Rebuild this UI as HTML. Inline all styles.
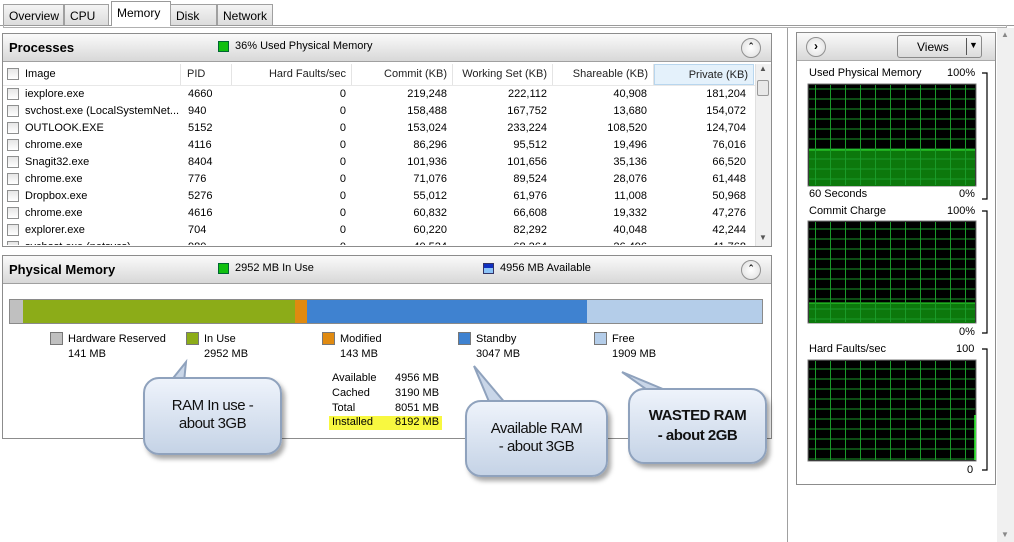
<!DOCTYPE html>
<html><head><style>
*{margin:0;padding:0;box-sizing:border-box}
body{width:1014px;height:542px;background:#fff;font-family:"Liberation Sans",sans-serif;font-size:11px;color:#000;position:relative;overflow:hidden}
.a{position:absolute;white-space:nowrap}
.tab{position:absolute;top:4px;height:21px;border:1px solid #a0a0a0;border-bottom:none;background:linear-gradient(#f4f4f4,#dcdcdc);font-size:12px;padding:4px 5px 0}
.hdr{position:absolute;background:linear-gradient(#fafafa,#d8d8d8);border-bottom:1px solid #a0a0a0;font-weight:bold;font-size:13px}
.cb{position:absolute;width:12px;height:12px;border:1px solid #8e8f8f;background:linear-gradient(#e6e6e6,#fff)}
.r{text-align:right}
.col{position:absolute;top:64px;height:21px;border-right:1px solid #e4e4e4;font-size:11px;padding-top:4px;text-align:right;padding-right:5px;color:#222}
.up{position:absolute;width:20px;height:20px;border-radius:50%;border:1px solid #909090;background:radial-gradient(#fff,#ddd);font-size:11px;text-align:center;line-height:18px;font-weight:bold}
.bub{position:absolute;border-radius:16px;background:linear-gradient(#eef3fb,#c5d3e6);border:2px solid #8fa2bd;box-shadow:3px 4px 5px rgba(0,0,0,.35);text-align:center;font-size:15px;color:#111;letter-spacing:-0.5px}
.sw{position:absolute;width:13px;height:13px;border:1px solid #777}
</style></head><body>
<div class="a" style="left:0;top:25px;width:1014px;height:1px;background:#9a9a9a"></div>
<div class="a" style="left:3px;top:25px;width:1004px;height:3px;border:1px solid #b0b0b0;border-top:none"></div>
<div class="tab" style="left:3px;width:61px">Overview</div>
<div class="tab" style="left:64px;width:45px">CPU</div>
<div class="tab" style="left:111px;top:1px;height:25px;width:60px;background:#fff;border-color:#999">Memory</div>
<div class="tab" style="left:170px;width:47px">Disk</div>
<div class="tab" style="left:217px;width:56px">Network</div>

<div class="a" style="left:2px;top:33px;width:770px;height:214px;border:1px solid #8c8c8c;background:#fff"></div>
<div class="hdr" style="left:3px;top:34px;width:768px;height:28px;padding:6px 0 0 6px">Processes</div>
<div class="a" style="left:218px;top:41px;width:11px;height:11px;background:#10c010;border:1px solid #063"></div>
<div class="a" style="left:235px;top:40px;font-size:11px">36% Used Physical Memory</div>
<div class="up" style="left:741px;top:38px">&#710;</div>
<div class="cb" style="left:7px;top:68px"></div>
<div class="a" style="left:25px;top:68px">Image</div>
<div class="col" style="left:180px;width:52px;text-align:left;padding-left:7px">PID</div>
<div class="a" style="left:180px;top:64px;width:1px;height:21px;background:#e4e4e4"></div>
<div class="col" style="left:232px;width:120px">Hard Faults/sec</div>
<div class="col" style="left:352px;width:101px">Commit (KB)</div>
<div class="col" style="left:453px;width:100px">Working Set (KB)</div>
<div class="col" style="left:553px;width:101px">Shareable (KB)</div>
<div class="col" style="left:654px;width:100px;background:#e4f1fb;border:1px solid #b8d6ee">Private (KB)</div>
<div class="a" style="left:3px;top:85px;width:752px;height:1px;background:#e8e8e8"></div>
<div class="a" style="left:755px;top:64px;width:16px;height:182px;background:#f0f0f0;border-left:1px solid #e0e0e0"></div>
<div class="a" style="left:757px;top:80px;width:12px;height:16px;border:1px solid #999;border-radius:2px;background:#e8e8e8"></div>
<div class="a" style="left:759px;top:64px;font-size:8px;color:#555">&#9650;</div>
<div class="a" style="left:759px;top:233px;font-size:8px;color:#555">&#9660;</div>
<div class="a" style="left:3px;top:86px;width:752px;height:159px;overflow:hidden">
<div class="a" style="top:0;left:0;width:752px;height:170px">
<div class="cb" style="left:4px;top:2px"></div><div class="a" style="left:22px;top:2px">iexplore.exe</div><div class="a" style="left:185px;top:2px">4660</div><div class="a r" style="left:230px;width:113px;top:2px">0</div><div class="a r" style="left:350px;width:94px;top:2px">219,248</div><div class="a r" style="left:450px;width:94px;top:2px">222,112</div><div class="a r" style="left:550px;width:94px;top:2px">40,908</div><div class="a r" style="left:650px;width:93px;top:2px">181,204</div>
<div class="cb" style="left:4px;top:19px"></div><div class="a" style="left:22px;top:19px">svchost.exe (LocalSystemNet...</div><div class="a" style="left:185px;top:19px">940</div><div class="a r" style="left:230px;width:113px;top:19px">0</div><div class="a r" style="left:350px;width:94px;top:19px">158,488</div><div class="a r" style="left:450px;width:94px;top:19px">167,752</div><div class="a r" style="left:550px;width:94px;top:19px">13,680</div><div class="a r" style="left:650px;width:93px;top:19px">154,072</div>
<div class="cb" style="left:4px;top:36px"></div><div class="a" style="left:22px;top:36px">OUTLOOK.EXE</div><div class="a" style="left:185px;top:36px">5152</div><div class="a r" style="left:230px;width:113px;top:36px">0</div><div class="a r" style="left:350px;width:94px;top:36px">153,024</div><div class="a r" style="left:450px;width:94px;top:36px">233,224</div><div class="a r" style="left:550px;width:94px;top:36px">108,520</div><div class="a r" style="left:650px;width:93px;top:36px">124,704</div>
<div class="cb" style="left:4px;top:53px"></div><div class="a" style="left:22px;top:53px">chrome.exe</div><div class="a" style="left:185px;top:53px">4116</div><div class="a r" style="left:230px;width:113px;top:53px">0</div><div class="a r" style="left:350px;width:94px;top:53px">86,296</div><div class="a r" style="left:450px;width:94px;top:53px">95,512</div><div class="a r" style="left:550px;width:94px;top:53px">19,496</div><div class="a r" style="left:650px;width:93px;top:53px">76,016</div>
<div class="cb" style="left:4px;top:70px"></div><div class="a" style="left:22px;top:70px">Snagit32.exe</div><div class="a" style="left:185px;top:70px">8404</div><div class="a r" style="left:230px;width:113px;top:70px">0</div><div class="a r" style="left:350px;width:94px;top:70px">101,936</div><div class="a r" style="left:450px;width:94px;top:70px">101,656</div><div class="a r" style="left:550px;width:94px;top:70px">35,136</div><div class="a r" style="left:650px;width:93px;top:70px">66,520</div>
<div class="cb" style="left:4px;top:87px"></div><div class="a" style="left:22px;top:87px">chrome.exe</div><div class="a" style="left:185px;top:87px">776</div><div class="a r" style="left:230px;width:113px;top:87px">0</div><div class="a r" style="left:350px;width:94px;top:87px">71,076</div><div class="a r" style="left:450px;width:94px;top:87px">89,524</div><div class="a r" style="left:550px;width:94px;top:87px">28,076</div><div class="a r" style="left:650px;width:93px;top:87px">61,448</div>
<div class="cb" style="left:4px;top:104px"></div><div class="a" style="left:22px;top:104px">Dropbox.exe</div><div class="a" style="left:185px;top:104px">5276</div><div class="a r" style="left:230px;width:113px;top:104px">0</div><div class="a r" style="left:350px;width:94px;top:104px">55,012</div><div class="a r" style="left:450px;width:94px;top:104px">61,976</div><div class="a r" style="left:550px;width:94px;top:104px">11,008</div><div class="a r" style="left:650px;width:93px;top:104px">50,968</div>
<div class="cb" style="left:4px;top:121px"></div><div class="a" style="left:22px;top:121px">chrome.exe</div><div class="a" style="left:185px;top:121px">4616</div><div class="a r" style="left:230px;width:113px;top:121px">0</div><div class="a r" style="left:350px;width:94px;top:121px">60,832</div><div class="a r" style="left:450px;width:94px;top:121px">66,608</div><div class="a r" style="left:550px;width:94px;top:121px">19,332</div><div class="a r" style="left:650px;width:93px;top:121px">47,276</div>
<div class="cb" style="left:4px;top:138px"></div><div class="a" style="left:22px;top:138px">explorer.exe</div><div class="a" style="left:185px;top:138px">704</div><div class="a r" style="left:230px;width:113px;top:138px">0</div><div class="a r" style="left:350px;width:94px;top:138px">60,220</div><div class="a r" style="left:450px;width:94px;top:138px">82,292</div><div class="a r" style="left:550px;width:94px;top:138px">40,048</div><div class="a r" style="left:650px;width:93px;top:138px">42,244</div>
<div class="cb" style="left:4px;top:155px"></div><div class="a" style="left:22px;top:155px">svchost.exe (netsvcs)</div><div class="a" style="left:185px;top:155px">980</div><div class="a r" style="left:230px;width:113px;top:155px">0</div><div class="a r" style="left:350px;width:94px;top:155px">40,524</div><div class="a r" style="left:450px;width:94px;top:155px">68,264</div><div class="a r" style="left:550px;width:94px;top:155px">26,496</div><div class="a r" style="left:650px;width:93px;top:155px">41,768</div>
</div></div>

<div class="a" style="left:2px;top:255px;width:770px;height:184px;border:1px solid #8c8c8c;background:#fff"></div>
<div class="hdr" style="left:3px;top:256px;width:768px;height:28px;padding:6px 0 0 6px">Physical Memory</div>
<div class="a" style="left:218px;top:263px;width:11px;height:11px;background:#10c010;border:1px solid #063"></div>
<div class="a" style="left:235px;top:262px">2952 MB In Use</div>
<div class="a" style="left:483px;top:263px;width:11px;height:11px;background:linear-gradient(#1030c0 45%,#8cc4f8 45%);border:1px solid #336"></div>
<div class="a" style="left:500px;top:262px">4956 MB Available</div>
<div class="up" style="left:741px;top:260px">&#710;</div>
<div class="a" style="left:9px;top:299px;width:754px;height:25px;border:1px solid #8a8a8a;display:flex">
<div style="width:13px;background:#c0c0c0"></div><div style="width:272px;background:#8cac18"></div><div style="width:12px;background:#e08a10"></div><div style="width:280px;background:#3f82d0"></div><div style="flex:1;background:#b4cde9"></div></div>
<div class="sw" style="left:50px;top:332px;background:#c0c0c0"></div><div class="a" style="left:68px;top:333px">Hardware Reserved</div><div class="a" style="left:68px;top:348px">141 MB</div>
<div class="sw" style="left:186px;top:332px;background:#8cac18"></div><div class="a" style="left:204px;top:333px">In Use</div><div class="a" style="left:204px;top:348px">2952 MB</div>
<div class="sw" style="left:322px;top:332px;background:#e08a10"></div><div class="a" style="left:340px;top:333px">Modified</div><div class="a" style="left:340px;top:348px">143 MB</div>
<div class="sw" style="left:458px;top:332px;background:#3f82d0"></div><div class="a" style="left:476px;top:333px">Standby</div><div class="a" style="left:476px;top:348px">3047 MB</div>
<div class="sw" style="left:594px;top:332px;background:#b4cde9"></div><div class="a" style="left:612px;top:333px">Free</div><div class="a" style="left:612px;top:348px">1909 MB</div>
<div class="a" style="left:332px;top:371px;line-height:15px">Available<br>Cached<br>Total</div>
<div class="a" style="left:395px;top:371px;line-height:15px">4956 MB<br>3190 MB<br>8051 MB</div>
<div class="a" style="left:329px;top:416px;width:113px;height:14px;background:#f8f840"></div>
<div class="a" style="left:332px;top:416px">Installed</div><div class="a" style="left:395px;top:416px">8192 MB</div>

<svg class="a" style="left:0;top:0" width="1014" height="542">
<polygon points="186,362 170,382 184,382" fill="#c9d6e8" stroke="#8fa2bd" stroke-width="2"/>
<polygon points="474,366 490,404 506,404" fill="#c9d6e8" stroke="#8fa2bd" stroke-width="2"/>
<polygon points="622,372 670,392 650,392" fill="#c9d6e8" stroke="#8fa2bd" stroke-width="2"/>
</svg>
<div class="bub" style="left:143px;top:377px;width:139px;height:78px;padding-top:18px;line-height:18px">RAM In use -<br>about 3GB</div>
<div class="bub" style="left:465px;top:400px;width:143px;height:77px;padding-top:18px;line-height:18px">Available RAM<br>- about 3GB</div>
<div class="bub" style="left:628px;top:388px;width:139px;height:76px;padding-top:16px;line-height:20px;font-weight:bold">WASTED RAM<br>- about 2GB</div>

<div class="a" style="left:787px;top:28px;width:1px;height:514px;background:#a0a0a0"></div>
<div class="a" style="left:997px;top:28px;width:17px;height:514px;background:#f0f0f0"></div>
<div class="a" style="left:1001px;top:30px;font-size:8px;color:#888">&#9650;</div>
<div class="a" style="left:1001px;top:530px;font-size:8px;color:#888">&#9660;</div>
<div class="a" style="left:796px;top:32px;width:200px;height:453px;border:1px solid #8c8c8c"></div>
<div class="a" style="left:797px;top:33px;width:198px;height:28px;background:linear-gradient(#fafafa,#d8d8d8);border-bottom:1px solid #aaa"></div>
<div class="up" style="left:806px;top:37px;font-size:12px;line-height:17px">&#8250;</div>
<div class="a" style="left:897px;top:35px;width:85px;height:23px;border:1px solid #8a8a8a;border-radius:3px;background:linear-gradient(#f8f8f8,#dcdcdc);font-size:12px;padding:4px 0 0 19px">Views</div>
<div class="a" style="left:966px;top:38px;width:1px;height:17px;background:#555"></div>
<div class="a" style="left:969px;top:40px;font-size:9px">&#9660;</div>

<div class="a" style="left:809px;top:67px">Used Physical Memory</div><div class="a" style="left:947px;top:67px">100%</div>
<div class="a" style="left:809px;top:188px">60 Seconds</div><div class="a" style="left:959px;top:188px">0%</div>
<div class="a" style="left:809px;top:205px">Commit Charge</div><div class="a" style="left:947px;top:205px">100%</div>
<div class="a" style="left:959px;top:326px">0%</div>
<div class="a" style="left:809px;top:343px">Hard Faults/sec</div><div class="a" style="left:956px;top:343px">100</div>
<div class="a" style="left:967px;top:464px">0</div>
<svg class="a" style="left:800px;top:60px" width="196" height="420">
<defs><pattern id="g" x="8" y="24" width="15" height="10" patternUnits="userSpaceOnUse"><path d="M7.5 0V10M0 5H15" stroke="#1a9a2a" stroke-width="1" fill="none"/></pattern></defs>
<g fill="none" stroke="#000" stroke-width="1.2"><path d="M182 13H187V139H182"/><path d="M182 151H187V273H182"/><path d="M182 289H187V410H182"/></g>
<rect x="8" y="24" width="168" height="102" fill="#000" stroke="#777"/>
<rect x="9" y="90" width="166" height="36" fill="#0c780c"/>
<line x1="9" y1="90" x2="175" y2="90" stroke="#30e030"/>
<rect x="9" y="25" width="166" height="100" fill="url(#g)"/>
<rect x="8" y="161" width="168" height="102" fill="#000" stroke="#777"/>
<rect x="9" y="243" width="166" height="20" fill="#0c780c"/>
<line x1="9" y1="243" x2="175" y2="243" stroke="#30e030"/>
<rect x="9" y="162" width="166" height="100" fill="url(#g)"/>
<rect x="8" y="300" width="168" height="101" fill="#000" stroke="#777"/>
<rect x="9" y="301" width="166" height="99" fill="url(#g)"/>
<line x1="175" y1="355" x2="175" y2="400" stroke="#30ff30" stroke-width="1.5"/>
</svg>
</body></html>
